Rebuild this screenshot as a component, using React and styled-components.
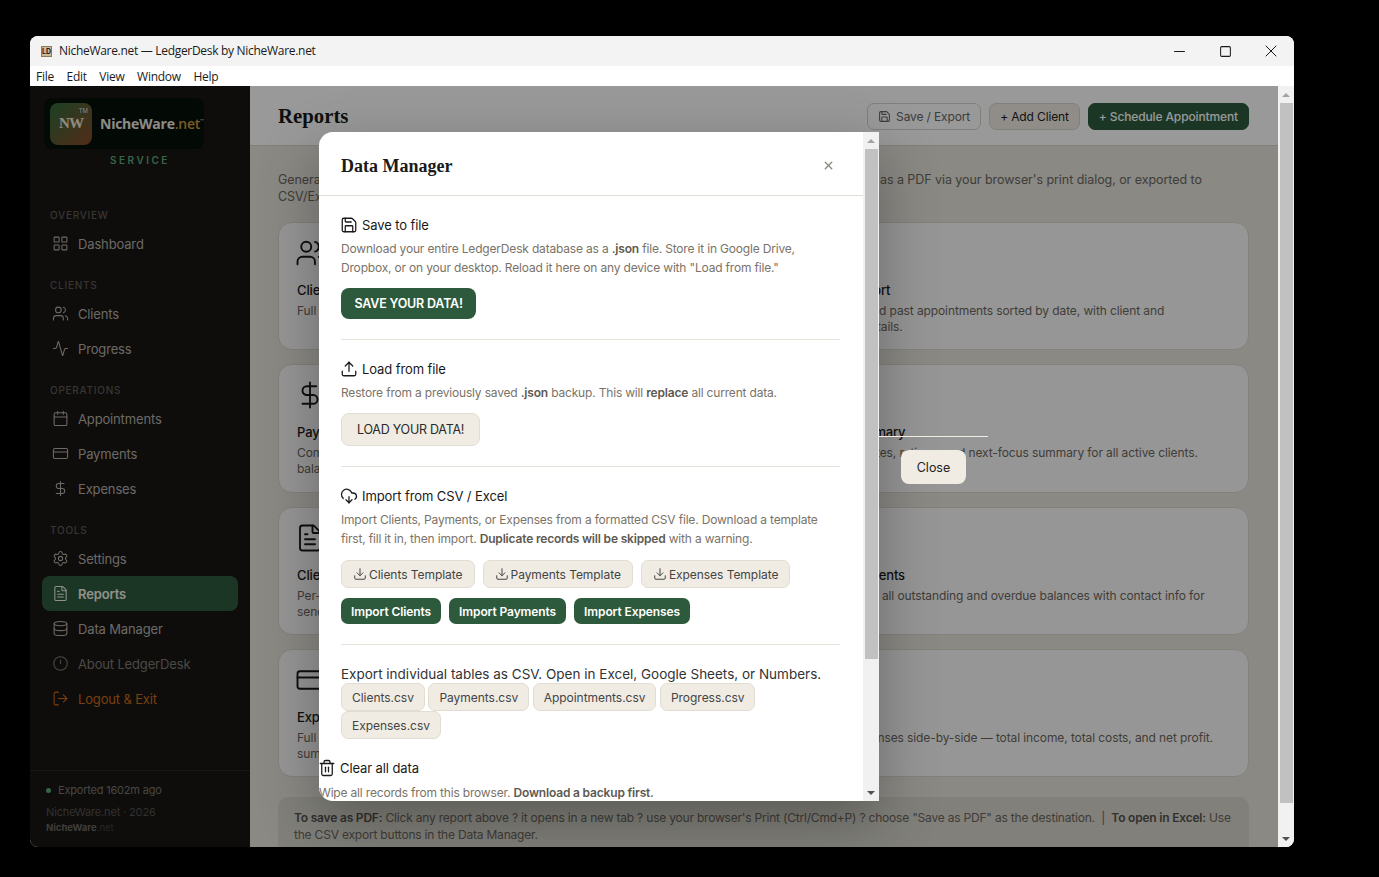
import React from 'react';
import styled, { createGlobalStyle } from 'styled-components';
import { LayoutGrid, Users, Activity, Calendar, CreditCard, DollarSign, Settings, FileText, Database, LogOut, Save, Upload, CloudDownload, Download, Trash2, X, Minus, Square } from 'lucide-react';

const SANS = '"Inter", "Open Sans", sans-serif';
const SERIF = '"Liberation Serif", serif';
const UI = '"Open Sans", "Noto Sans", sans-serif';

const Global = createGlobalStyle`
  html, body { margin: 0; padding: 0; background: #000; height: 100%; overflow: hidden; }
  * { box-sizing: border-box; }
  #root { padding: 36px 0 0 30px; }
`;

const Win = styled.div`
  width: 1264px; height: 811px; border-radius: 8px; overflow: hidden;
  display: flex; flex-direction: column; background: #fff; font-family: ${SANS};
`;
const TitleBar = styled.div`
  height: 30px; background: #f3f3f3; display: flex; align-items: center; padding-left: 11px;
  font: 12px ${UI}; color: #1a1a1a; letter-spacing: -0.3px;
`;
const AppIcon = styled.span`
  width: 11px; height: 11px; background: #cbb89a; border: 1px solid #8d7a5e; margin-right: 7px;
  font: bold 7px ${SANS}; letter-spacing: 0; color: #222; display: flex; align-items: center; justify-content: center;
`;
const TitleText = styled.span`flex: 1; margin-top: -2px;`;
const WinBtn = styled.span`
  width: 46px; height: 30px; display: flex; align-items: center; justify-content: center; color: #1a1a1a;
`;
const MenuBar = styled.div`
  height: 20px; background: #fff; display: flex; align-items: center; gap: 12.5px; padding-left: 6px;
  font: 12px ${UI}; color: #1a1a1a; letter-spacing: -0.25px;
`;
const Body = styled.div`flex: 1; display: flex; min-height: 0;`;
const Stage = styled.div`flex: 1; position: relative; display: flex; min-width: 0;`;
const Side = styled.aside`
  width: 220px; background: #181615; display: flex; flex-direction: column; padding-top: 12px;
`;
const Brand = styled.div`display: flex; flex-direction: column; align-items: flex-start; padding-left: 14px; height: 93px;`;
const LogoBox = styled.div`
  width: 160px; height: 51px; border-radius: 8px; background: #050f08; display: flex; align-items: center; padding-left: 6px;
`;
const LogoMark = styled.div`
  position: relative; width: 42px; height: 42px; border-radius: 8px; background: linear-gradient(135deg, #2f6b3c 0%, #8a4a28 100%);
  display: flex; align-items: center; justify-content: center; font: bold 15px ${SERIF}; color: #f0e8d8; letter-spacing: -1px;
`;
const Tm = styled.span`position: absolute; top: 4px; right: 4px; font: 6px ${SANS}; letter-spacing: 0; color: #ddd;`;
const LogoText = styled.span`margin-left: 8px; font: 700 14px ${UI}; color: #ece8e0; letter-spacing: -0.25px; white-space: nowrap;`;
const LogoNet = styled.span`color: #c99a3c; font-weight: 600;`;
const LogoSup = styled.sup`font: 6px ${SANS}; color: #ddd; vertical-align: 5px; letter-spacing: 0;`;
const Service = styled.div`
  width: 220px; margin: 4px 0 0 -14px; text-align: center; font: 600 10px/14px ${SANS}; letter-spacing: 2.5px; color: #5aa878;
`;
const NavLabel = styled.div`
  font: 500 10px/14px ${SANS}; letter-spacing: 0.75px; text-transform: uppercase; color: #5e5a55; padding-left: 20px; margin: 17px 0 4px;
`;
const NavItem = styled.div`
  height: 35px; margin: 0 12px; padding-left: 10px; display: flex; align-items: center; gap: 9px; border-radius: 8px;
  font: ${p => (p.$active ? 600 : 400)} 13px ${SANS}; letter-spacing: -0.15px;
  color: ${p => p.$color || '#b5b1a9'}; background: ${p => (p.$active ? '#2d5a3d' : 'transparent')};
`;
const SideFoot = styled.div`
  margin-top: auto; height: 77px; border-top: 1px solid #2a2826; padding: 11px 0 0 16px;
`;
const Status = styled.div`display: flex; align-items: center; gap: 7px; font: 11px/16px ${SANS}; color: #7a7670; letter-spacing: -0.2px;`;
const Dot = styled.span`width: 5px; height: 5px; border-radius: 50%; background: #5aa878;`;
const Copy = styled.div`font: 11px/14px ${SANS}; color: #55524e; margin-top: 7px; letter-spacing: -0.15px;`;
const FootBrand = styled.div`font: 700 9.5px/12px ${SANS}; color: #6a6660; margin-top: 3px; span { font-weight: 400; color: #44413e; }`;

const Main = styled.main`flex: 1; background: #e6e4dc; min-width: 0; overflow: hidden;`;
const TopBar = styled.header`
  height: 60px; background: #fff; border-bottom: 1px solid #d8d4ca; display: flex; align-items: center; padding: 0 29px 0 28px; gap: 8px;
`;
const PageTitle = styled.h1`flex: 1; margin: 0; font: bold 20.8px ${SERIF}; color: #1a1a1a;`;
const HeadBtn = styled.button`
  height: 27px; margin-top: 2px; padding: 0 10px; border-radius: 7px; display: flex; align-items: center; gap: 5px;
  font: ${p => (p.$kind === 'primary' ? 500 : 400)} 12px ${SANS}; letter-spacing: -0.13px; cursor: pointer;
  color: ${p => (p.$kind === 'primary' ? '#fff' : p.$kind === 'ghost' ? '#666' : '#222')};
  background: ${p => (p.$kind === 'primary' ? '#2d5a3d' : p.$kind === 'ghost' ? 'transparent' : '#f0ece4')};
  border: 1px solid ${p => (p.$kind === 'primary' ? '#2d5a3d' : '#d8d4ca')};
`;
const Content = styled.div`padding: 25px 29px 0 28px;`;
const Lead = styled.p`margin: 0 0 17px; font: 12.5px/17px ${SANS}; color: #6b6760; letter-spacing: -0.06px;`;
const Cards = styled.div`display: grid; grid-template-columns: 1fr 1fr; grid-auto-rows: 128.25px; gap: 14px;`;
const Card = styled.div`
  background: #fbfbfa; border: 1px solid #dcd8ce; border-radius: 14px; padding: 16px 18px;
`;
const CardIcon = styled.div`
  height: 28px; margin-bottom: 14px; color: #1a1a1a; display: flex; align-items: center;
  svg { margin-left: -2px; flex: none; }
`;
const CardTitle = styled.div`font: 500 13px/18px ${SANS}; color: #1a1a1a; letter-spacing: -0.15px; margin-bottom: 4px;`;
const CardDesc = styled.div`font: 12px/16px ${SANS}; color: #6b6760; letter-spacing: -0.1px; white-space: pre-line;`;
const Note = styled.div`
  margin-top: 20px; background: #d8d5cb; border-radius: 10px; padding: 12px 16px; font: 12px/17px ${SANS}; color: #6b6760; letter-spacing: -0.2px;
  b { font-weight: 600; color: #55524c; }
`;

const Bar = styled.div`
  width: ${p => p.$w}px; background: #f1f1f1; display: flex; flex-direction: column; align-items: center; flex: none;
`;
const Arrow = styled.div`
  height: 17px; width: 100%; flex: none; display: flex; align-items: center; justify-content: center;
  &::before {
    content: ''; border-left: 4px solid transparent; border-right: 4px solid transparent;
    ${p => (p.$down ? 'border-top: 4px solid #505050;' : 'border-bottom: 4px solid #a3a3a3;')}
  }
`;
const Thumb = styled.div`width: 13px; height: ${p => p.$h}px; background: #c1c1c1; flex: none;`;
const Spacer = styled.div`flex: 1;`;

const Overlay = styled.div`position: absolute; inset: 0; background: rgba(0, 0, 0, 0.4);`;
const Modal = styled.div`
  position: absolute; left: 289px; top: 46px; width: 560px; height: 669px; background: #fff;
  border-radius: 14px 0 0 14px; display: flex; box-shadow: 0 20px 60px rgba(0, 0, 0, 0.3);
`;
const ModalMain = styled.div`flex: 1; min-width: 0; overflow: hidden; border-radius: 14px 0 0 14px;`;
const ModalHead = styled.div`
  height: 64px; border-bottom: 1px solid #e0ddd6; display: flex; align-items: center; justify-content: space-between; padding: 6px 28px 0 22px;
`;
const ModalTitle = styled.h2`margin: 0; font: bold 18px ${SERIF}; color: #1a1a1a;`;
const CloseX = styled.span`color: #8a857c; display: flex; margin-top: -3px;`;
const Section = styled.section`
  margin: 0 23px 0 22px; padding: 20px 0; border-bottom: 1px solid #e6e2da;
  &:last-of-type { border-bottom: 0; padding-bottom: 0; }
`;
const Heading = styled.div`
  display: flex; align-items: center; gap: 6px; height: 18px; font: 13px/18px ${SANS}; color: #1a1a1a; letter-spacing: -0.1px;
  svg { margin: -1px -1.5px -1px -1.5px; flex: none; }
`;
const Desc = styled.p`
  margin: 5px 0 0; font: 12px/19px ${SANS}; color: #7a7368; letter-spacing: -0.18px;
  b { font-weight: 600; color: #5e5951; }
`;
const SolidBtn = styled.button`
  margin-top: 11px; height: 31px; padding: 0 13.5px; background: #2d5a3d; border: 0; border-radius: 8px;
  color: #fff; font: 600 12.5px ${SANS}; letter-spacing: -0.2px; display: block;
`;
const SoftBtn = styled.button`
  margin-top: 11px; height: 33px; padding: 0 15px; background: #f0ece4; border: 1px solid #e2ddd3; border-radius: 8px;
  color: #2a2a2a; font: 12.5px ${SANS}; letter-spacing: -0.25px; display: block;
`;
const Row = styled.div`display: flex; gap: 8px; margin-top: ${p => p.$mt}px;`;
const TemplateBtn = styled.button`
  height: 28px; padding: 0 11px; background: #f0ece4; border: 1px solid #e2ddd3; border-radius: 7px;
  display: flex; align-items: center; gap: 2px; color: #444; font: 12px ${SANS}; letter-spacing: -0.05px;
`;
const ImportBtn = styled.button`
  height: 26px; padding: 0 10px; background: #2d5a3d; border: 0; border-radius: 7px;
  color: #fff; font: 600 12px ${SANS}; letter-spacing: -0.1px;
`;
const ExportLead = styled.div`font: 13.5px/18px ${SANS}; color: #333; letter-spacing: 0;`;
const Chips = styled.div`display: flex; flex-wrap: wrap; gap: 0 3.5px;`;
const Chip = styled.button`
  height: 28px; padding: 0 10px; background: #f0ece4; border: 1px solid #e2ddd3; border-radius: 7px; color: #444; font: 12px ${SANS}; letter-spacing: -0.03px;
`;
const Clear = styled.div`margin-top: 20px;`;
const ClearHeading = styled(Heading)`margin-left: -22px;`;
const ClearDesc = styled(Desc)`margin: 6px 0 0 -22px; white-space: nowrap;`;
const FootRule = styled.div`position: absolute; left: 849px; top: 350px; width: 109px; height: 1px; background: #f0ece4;`;
const CloseBtn = styled.button`
  position: absolute; left: 871px; top: 364px; width: 65px; height: 34px; background: #f0ece4; border: 0; border-radius: 8px;
  color: #222; font: 12.5px ${SANS};
`;

const ClockIcon = ({ size = 15, strokeWidth = 1.5 }) => (
  <svg width={size} height={size} viewBox="0 0 24 24" fill="none" stroke="currentColor" strokeWidth={strokeWidth} strokeLinecap="round">
    <circle cx="12" cy="12" r="9.5" />
    <path d="M12 7v5" />
  </svg>
);

const nav = [
  ['Overview', [['Dashboard', LayoutGrid]]],
  ['Clients', [['Clients', Users], ['Progress', Activity]]],
  ['Operations', [['Appointments', Calendar], ['Payments', CreditCard], ['Expenses', DollarSign]]],
  ['Tools', [['Settings', Settings], ['Reports', FileText, { active: true, color: '#f4f1ea' }], ['Data Manager', Database], ['About LedgerDesk', ClockIcon, { color: '#7e7a74' }], ['Logout & Exit', LogOut, { color: '#c76a1e' }]]],
];

const cards = [
  [Users, 'Client Roster', 'Full list of all clients with contact details, status, and session rates.'],
  [Calendar, 'Schedule Report', 'All upcoming and past appointments sorted by date, with client and\nappointment details.'],
  [DollarSign, 'Payment History', 'Complete log of every payment received, with client names and running\nbalance totals.'],
  [Activity, 'Progress Summary', 'Last session notes, ratings, and next-focus summary for all active clients.'],
  [FileText, 'Client Statement', 'Per-client statement of sessions and payments, formatted to print and\nsend.'],
  [CreditCard, 'Overdue Payments', 'Follow-up list of all outstanding and overdue balances with contact info for\nfollow-up.'],
  [CreditCard, 'Expense Report', 'Full list of business expenses by category and date, with a totals\nsummary.'],
  [Activity, 'Profit & Loss', 'Income vs expenses side-by-side — total income, total costs, and net profit.'],
];

export default function App() {
  return (
    <>
      <Global />
      <Win>
        <TitleBar>
          <AppIcon>LD</AppIcon>
          <TitleText>NicheWare.net — LedgerDesk by NicheWare.net</TitleText>
          <WinBtn><Minus size={17} strokeWidth={1.5} /></WinBtn>
          <WinBtn><Square size={13} strokeWidth={1.9} /></WinBtn>
          <WinBtn><X size={20} strokeWidth={1.2} /></WinBtn>
        </TitleBar>
        <MenuBar>
          {['File', 'Edit', 'View', 'Window', 'Help'].map(m => <span key={m}>{m}</span>)}
        </MenuBar>
        <Body>
          <Stage>
            <Side>
              <Brand>
                <LogoBox>
                  <LogoMark>NW<Tm>TM</Tm></LogoMark>
                  <LogoText>NicheWare<LogoNet>.net</LogoNet><LogoSup>™</LogoSup></LogoText>
                </LogoBox>
                <Service>SERVICE</Service>
              </Brand>
              {nav.map(([label, items]) => (
                <React.Fragment key={label}>
                  <NavLabel>{label}</NavLabel>
                  {items.map(([name, Icon, opt = {}]) => (
                    <NavItem key={name} $active={opt.active} $color={opt.color}>
                      <Icon size={17} strokeWidth={1.5} />
                      {name}
                    </NavItem>
                  ))}
                </React.Fragment>
              ))}
              <SideFoot>
                <Status><Dot />Exported 1602m ago</Status>
                <Copy>NicheWare.net · 2026</Copy>
                <FootBrand>NicheWare<span>.net</span></FootBrand>
              </SideFoot>
            </Side>
            <Main>
              <TopBar>
                <PageTitle>Reports</PageTitle>
                <HeadBtn $kind="ghost"><Save size={13} />Save / Export</HeadBtn>
                <HeadBtn>+ Add Client</HeadBtn>
                <HeadBtn $kind="primary">+ Schedule Appointment</HeadBtn>
              </TopBar>
              <Content>
                <Lead>Generate polished reports from all LedgerDesk data. Each report opens in a new tab and can be saved as a PDF via your browser's print dialog, or exported to<br />CSV/Excel from the Data Manager.</Lead>
                <Cards>
                  {cards.map(([Icon, title, desc]) => (
                    <Card key={title}>
                      <CardIcon><Icon size={30} strokeWidth={1.5} /></CardIcon>
                      <CardTitle>{title}</CardTitle>
                      <CardDesc>{desc}</CardDesc>
                    </Card>
                  ))}
                </Cards>
                <Note>
                  <b>To save as PDF:</b> Click any report above ? it opens in a new tab ? use your browser's Print (Ctrl/Cmd+P) ? choose "Save as PDF" as the destination. &nbsp;|&nbsp; <b>To open in Excel:</b> Use the CSV export buttons in the Data Manager.
                </Note>
              </Content>
            </Main>
            <Overlay />
            <Modal>
              <ModalMain>
                <ModalHead>
                  <ModalTitle>Data Manager</ModalTitle>
                  <CloseX><X size={13} strokeWidth={2.4} /></CloseX>
                </ModalHead>
                <Section>
                  <Heading><Save size={18} strokeWidth={1.7} />Save to file</Heading>
                  <Desc>Download your entire LedgerDesk database as a <b>.json</b> file. Store it in Google Drive, Dropbox, or on your desktop. Reload it here on any device with "Load from file."</Desc>
                  <SolidBtn>SAVE YOUR DATA!</SolidBtn>
                </Section>
                <Section>
                  <Heading><Upload size={18} strokeWidth={1.7} />Load from file</Heading>
                  <Desc>Restore from a previously saved <b>.json</b> backup. This will <b>replace</b> all current data.</Desc>
                  <SoftBtn>LOAD YOUR DATA!</SoftBtn>
                </Section>
                <Section>
                  <Heading><CloudDownload size={18} strokeWidth={1.7} />Import from CSV / Excel</Heading>
                  <Desc>Import Clients, Payments, or Expenses from a formatted CSV file. Download a template first, fill it in, then import. <b>Duplicate records will be skipped</b> with a warning.</Desc>
                  <Row $mt={12}>
                    {['Clients', 'Payments', 'Expenses'].map(n => (
                      <TemplateBtn key={n}><Download size={14} strokeWidth={1.7} />{n} Template</TemplateBtn>
                    ))}
                  </Row>
                  <Row $mt={10}>
                    {['Clients', 'Payments', 'Expenses'].map(n => <ImportBtn key={n}>Import {n}</ImportBtn>)}
                  </Row>
                </Section>
                <Section>
                  <ExportLead>Export individual tables as CSV. Open in Excel, Google Sheets, or Numbers.</ExportLead>
                  <Chips>
                    {['Clients', 'Payments', 'Appointments', 'Progress', 'Expenses'].map(n => <Chip key={n}>{n}.csv</Chip>)}
                  </Chips>
                  <Clear>
                    <ClearHeading><Trash2 size={18} strokeWidth={1.7} />Clear all data</ClearHeading>
                    <ClearDesc>Wipe all records from this browser. <b>Download a backup first.</b></ClearDesc>
                  </Clear>
                </Section>
              </ModalMain>
              <Bar $w={16}>
                <Arrow /><Thumb $h={510} /><Spacer /><Arrow $down />
              </Bar>
            </Modal>
            <FootRule />
            <CloseBtn>Close</CloseBtn>
          </Stage>
          <Bar $w={16}>
            <Arrow /><Thumb $h={700} /><Spacer /><Arrow $down />
          </Bar>
        </Body>
      </Win>
    </>
  );
}
